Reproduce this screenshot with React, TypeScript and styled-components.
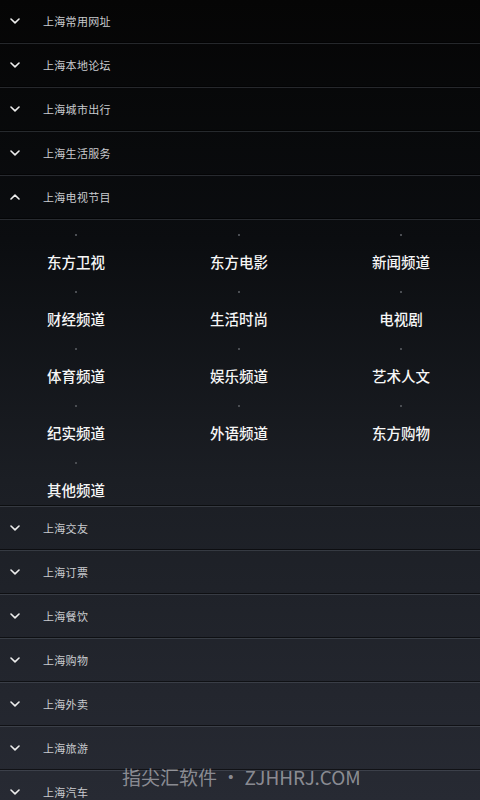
import styled, { createGlobalStyle } from 'styled-components';

const GlobalStyle = createGlobalStyle`
  html, body {
    margin: 0;
    padding: 0;
    background: #050505;
  }
  body {
    font-family: 'Noto Sans CJK SC', 'Noto Sans', sans-serif;
  }
`;

const Page = styled.div`
  position: relative;
  width: 480px;
  height: 800px;
  overflow: hidden;
  background: linear-gradient(to bottom, #050505 0%, #0b0d10 30%, #1b1e24 60%, #272a33 100%);
`;

const Header = styled.div`
  display: flex;
  align-items: center;
  height: 42px;
  border-bottom: 1px solid rgba(0, 0, 0, 0.55);
  box-shadow: 0 1px 0 rgba(120, 125, 135, 0.28);
  margin-bottom: 1px;
`;

const Chevron = styled.svg`
  width: 10px;
  height: 6px;
  margin-left: 10px;
  margin-right: 23px;
  flex-shrink: 0;
`;

const HeaderTitle = styled.span`
  font-size: 11px;
  color: #c9cbcf;
  letter-spacing: 0.3px;
`;

const Panel = styled.div`
  display: grid;
  grid-template-columns: 152px 174px 150px;
  border-bottom: 1px solid rgba(0, 0, 0, 0.55);
  box-shadow: 0 1px 0 rgba(120, 125, 135, 0.28);
  margin-bottom: 1px;
`;

const Cell = styled.div`
  display: flex;
  flex-direction: column;
  align-items: center;
  height: 57px;
`;

const Dot = styled.span`
  width: 2px;
  height: 2px;
  margin-top: 14px;
  background: #4a4d52;
`;

const CellLabel = styled.span`
  margin-top: 16px;
  font-size: 14.5px;
  font-weight: 500;
  color: #f6f6f6;
  line-height: 20px;
`;

const Watermark = styled.div`
  position: absolute;
  left: 122px;
  top: 764px;
  font-family: 'Noto Sans CJK SC', 'Noto Sans', sans-serif;
  font-size: 19px;
  line-height: 26px;
  color: rgba(205, 205, 210, 0.62);
  white-space: nowrap;
`;

const ChevronIcon = ({ up }: { up?: boolean }) => (
  <Chevron viewBox="0 0 10 6">
    <polyline
      points={up ? '1,5 5,1.2 9,5' : '1,1 5,4.8 9,1'}
      fill="none"
      stroke="#eeeeee"
      strokeWidth="1.6"
      strokeLinecap="round"
      strokeLinejoin="round"
    />
  </Chevron>
);

const topSections = ['上海常用网址', '上海本地论坛', '上海城市出行', '上海生活服务'];
const bottomSections = ['上海交友', '上海订票', '上海餐饮', '上海购物', '上海外卖', '上海旅游', '上海汽车'];
const channels = [
  '东方卫视', '东方电影', '新闻频道',
  '财经频道', '生活时尚', '电视剧',
  '体育频道', '娱乐频道', '艺术人文',
  '纪实频道', '外语频道', '东方购物',
  '其他频道',
];

export default function App() {
  return (
    <Page>
      <GlobalStyle />
      {topSections.map((title) => (
        <Header key={title}>
          <ChevronIcon />
          <HeaderTitle>{title}</HeaderTitle>
        </Header>
      ))}
      <Header>
        <ChevronIcon up />
        <HeaderTitle>上海电视节目</HeaderTitle>
      </Header>
      <Panel>
        {channels.map((name) => (
          <Cell key={name}>
            <Dot />
            <CellLabel>{name}</CellLabel>
          </Cell>
        ))}
      </Panel>
      {bottomSections.map((title) => (
        <Header key={title}>
          <ChevronIcon />
          <HeaderTitle>{title}</HeaderTitle>
        </Header>
      ))}
      <Watermark>指尖汇软件 • ZJHHRJ.COM</Watermark>
    </Page>
  );
}
